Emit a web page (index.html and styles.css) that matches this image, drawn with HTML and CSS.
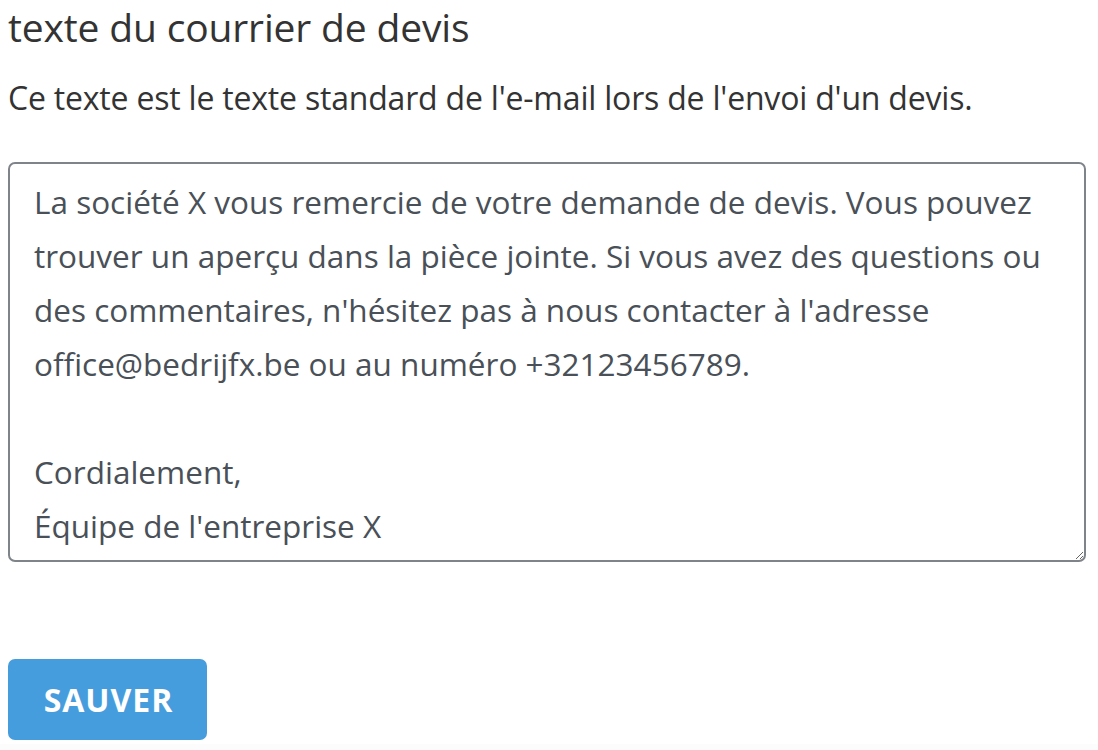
FILE: index.html
```html
<!DOCTYPE html>
<html lang="fr">
<head>
<meta charset="utf-8">
<link rel="stylesheet" href="styles.css">
</head>
<body>
<main class="page">
  <h2 class="title">texte du courrier de devis</h2>
  <p class="desc">Ce texte est le texte standard de l'e-mail lors de l'envoi d'un devis.</p>
  <textarea class="mail" rows="7">La société X vous remercie de votre demande de devis. Vous pouvez trouver un aperçu dans la pièce jointe. Si vous avez des questions ou des commentaires, n'hésitez pas à nous contacter à l'adresse office@bedrijfx.be ou au numéro +32123456789.

Cordialement,
Équipe de l'entreprise X</textarea>
  <div class="actions">
    <button class="save" type="button">SAUVER</button>
  </div>
</main>
<footer class="strip"></footer>
</body>
</html>
```
FILE: styles.css
```css
html, body {
  margin: 0;
  padding: 0;
  background: #ffffff;
}
body {
  font-family: "Open Sans", "Noto Sans", sans-serif;
  color: #333333;
  height: 750px;
  display: flex;
  flex-direction: column;
  overflow: hidden;
}
.page {
  padding: 0 12px 0 8px;
  display: flex;
  flex-direction: column;
}
.title {
  margin: 3px 0 0;
  font-size: 39px;
  font-weight: 400;
  line-height: 48px;
  letter-spacing: -0.15px;
  color: #333333;
}
.desc {
  margin: 27px 0 0;
  font-size: 32px;
  line-height: 40px;
  letter-spacing: -0.2px;
  color: #333333;
}
.mail {
  margin-top: 44px;
  box-sizing: border-box;
  width: 1078px;
  height: 400px;
  border: 2px solid #7f848a;
  border-radius: 7px;
  padding: 11px 10px 6px 24px;
  font-family: inherit;
  font-size: 31.5px;
  line-height: 54px;
  color: #495057;
  resize: vertical;
  outline: none;
  overflow: hidden;
}
.actions {
  margin-top: 97px;
  display: flex;
}
.save {
  width: 199px;
  height: 81px;
  border: none;
  border-radius: 7px;
  background: #469ddd;
  color: #ffffff;
  font-family: inherit;
  font-size: 32px;
  font-weight: 700;
  letter-spacing: 1px;
  padding: 0 0 0 2px;
}
.strip {
  margin-top: auto;
  height: 6px;
  background: #fcfcfc;
}
```
